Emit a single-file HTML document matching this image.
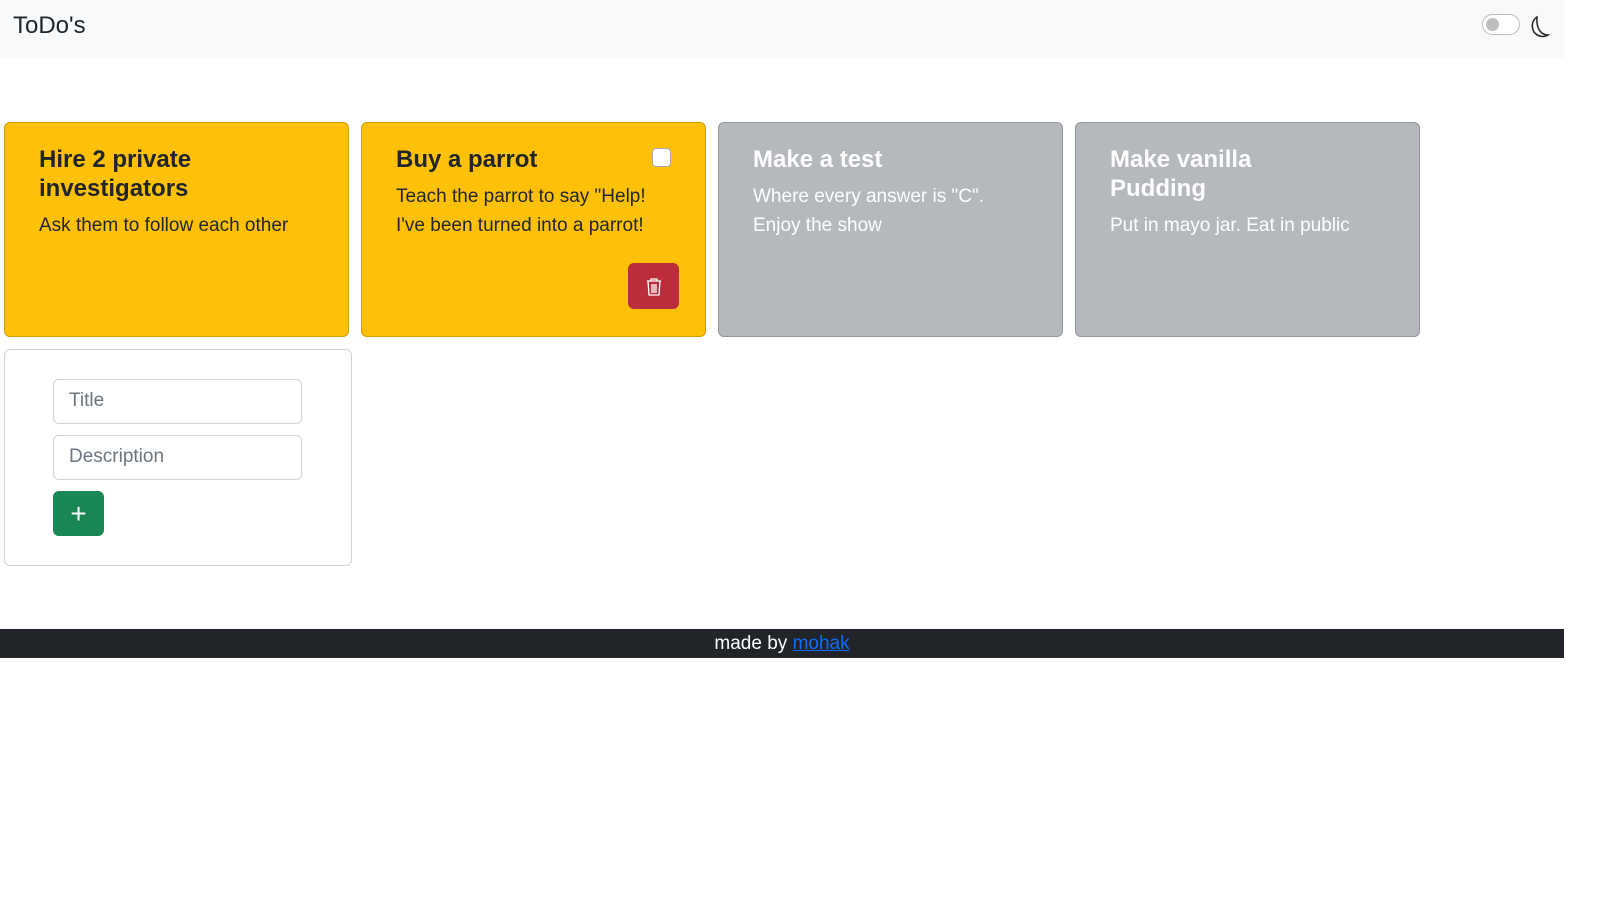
<!DOCTYPE html>
<html><head><meta charset="utf-8"><style>
body{margin:0;width:1623px;height:914px;font-family:"Liberation Sans",sans-serif;background:#fff;position:relative;overflow:hidden}
.nav{position:absolute;left:0;top:0;width:1564px;height:58px;background:#f8f9fa}
.brand{position:absolute;left:13px;top:12px;font-size:24px;color:#212529}
.sw{position:absolute;left:1482px;top:14px;width:36px;height:19px;border:1px solid #bbb;border-radius:11px;background:#fff}
.sw:after{content:"";position:absolute;left:3px;top:3px;width:13px;height:13px;border-radius:50%;background:#bfbfbf}
.card{position:absolute;top:122px;width:345px;height:215px;border:1px solid rgba(0,0,0,.18);border-radius:6px;box-sizing:border-box;padding:22px 34px}
.y{background:#ffc107;color:#212529}.g{background:#b5b8bd;color:#fff}
h5{margin:0 0 8px;font-size:24px;font-weight:bold;line-height:29px;width:200px}
p{margin:0;font-size:19px;line-height:29px}
.cb{position:absolute;left:290px;top:25px;width:17px;height:17px;background:#fff;border:1px solid #aaa;border-radius:4px}
.del{position:absolute;left:266px;top:140px;width:51px;height:46px;background:#bb2d3b;border-radius:6px}
.form{position:absolute;left:4px;top:349px;width:348px;height:217px;border:1px solid rgba(0,0,0,.18);border-radius:6px;box-sizing:border-box}
.in{position:absolute;left:48px;width:249px;height:45px;border:1px solid #ced4da;border-radius:6px;box-sizing:border-box;padding:10px 15px;font-size:19px;color:#6c757d}
.add{position:absolute;left:48px;top:141px;width:51px;height:45px;background:#198754;border-radius:6px;color:#fff;font-size:28px;text-align:center;line-height:45px;font-weight:300}
.foot{position:absolute;left:0;top:629px;width:1564px;height:29px;background:#212529;color:#fff;text-align:center;font-size:19px;line-height:30px}
.foot a{color:#0d6efd;text-decoration:underline}
</style></head><body>
<div class="nav"><div class="brand">ToDo's</div><div class="sw"></div>
<svg style="position:absolute;left:1528px;top:15px" width="22" height="24" viewBox="0 0 22 24"><path d="M9 2C4 5 3 12 6 17c3 4 9 6 14 3C14 20 8 15 9 2z" fill="none" stroke="#222" stroke-width="1.5"/></svg></div>
<div class="card y" style="left:4px"><h5>Hire 2 private investigators</h5><p>Ask them to follow each other</p></div>
<div class="card y" style="left:361px"><h5>Buy a parrot</h5><p>Teach the parrot to say "Help! I've been turned into a parrot!</p><div class="cb"></div>
<div class="del"><svg style="position:absolute;left:17px;top:14px" width="18" height="20" viewBox="0 0 18 20" fill="none" stroke="#fff" stroke-width="1.3"><path d="M2 4h14M6 4V2h6v2M3 4l1 14h10l1-14M7 7v9M9 7v9M11 7v9"/></svg></div></div>
<div class="card g" style="left:718px"><h5>Make a test</h5><p>Where every answer is "C". Enjoy the show</p></div>
<div class="card g" style="left:1075px"><h5>Make vanilla Pudding</h5><p>Put in mayo jar. Eat in public</p></div>
<div class="form"><div class="in" style="top:29px">Title</div><div class="in" style="top:85px">Description</div><div class="add">+</div></div>
<div class="foot">made by <a>mohak</a></div>
</body></html>
